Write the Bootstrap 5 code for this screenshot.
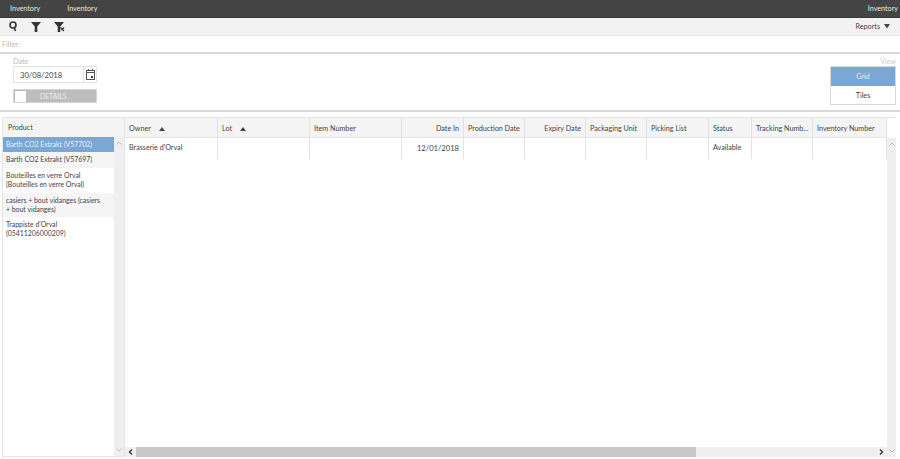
<!DOCTYPE html>
<html lang="en">
<head>
<meta charset="utf-8">
<title>Inventory</title>
<link href="https://cdn.jsdelivr.net/npm/bootstrap@5.3.0/dist/css/bootstrap.min.css" rel="stylesheet">
<style>
html,body{height:459px;overflow:hidden;margin:0;background:#fff}
body{font-family:Lato,"Open Sans",sans-serif;font-size:7.2px;line-height:10px;color:#444}
.topbar{height:18px;background:#444;color:#e8e8e8;padding:0 2px 0 10px;border-bottom:1px solid #3a3a3a}
.crumb-sep{width:27px}
.toolbar{height:18px;background:#f2f2f2;padding:0 10px 0 8px;border-bottom:1px solid #e6e6e6}
.tool-icons{gap:13px}
.report-label{padding-top:1px}
.filterbar{height:18px;padding:4px 2px 0;color:#bbb;border-bottom:2px solid #d8d8d8}
.params{height:58px;border-bottom:2px solid #d8d8d8;padding:3px 4px 0 13px}
.field-label{color:#bbb;height:9px}
.date-row{height:17px;width:84px}
.date-box{width:71px;border:1px solid #e2e2e2;padding:3px 6px;color:#444;font-size:7.6px}
.cal-btn{width:13px;border:1px solid #e2e2e2;border-left:0}
.toggle-bar{width:84px;height:14px;margin-top:6px;background:#bdbdbd;color:#eee;border:1px solid #d4d4d4;padding-left:1px}
.toggle-knob{width:11px;height:11px;background:#fff}
.toggle-text{padding-left:14px;font-size:6.8px}
.view-col{width:66px}
.view-label{color:#ccc;text-align:right;height:9px}
.view-box{border:1px solid #d8d8d8;width:66px}
.view-opt{height:18px;line-height:19px;text-align:center}
.view-active{background:#7aa7d4;color:#e6eef7;height:19px;line-height:20px}
.grid-area{height:340px;margin:5px 4px 0 2px}
.prod-panel{width:123px;border:1px solid #e4e4e4}
.prod-head{height:19px;background:#f4f4f4;padding:5px 5px}
.prod-body{height:319px}
.prod-list{width:112px}
.prod-row{padding:2px 3px;color:#444;background:#fff;height:16px;font-size:6.9px}
.prod-row.sel{background:#7aa7d4;color:#e9f0f8;height:15px}
.prod-row.two{height:24.5px;padding:3px 8px 0 3px;line-height:9.2px}
.prod-row.alt{background:#f5f5f5}
.v-scroll{width:10px;background:#efefef}
.main-panel{flex:1;min-width:0;border-top:1px solid #e4e4e4}
.head-row{height:20px;background:#f4f4f4;width:762px;border-bottom:1px solid #e6e6e6}
.data-row{height:21px;width:762px}
.cell{padding:6px 4px 0;border-right:1px solid #e2e2e2;white-space:nowrap;overflow:hidden;flex:none}
.data-row .cell{padding-top:5px}
.w-owner{width:93px}
.w-lot,.w-item{width:92px}
.w-date,.w-pick{width:62px}
.w-prod,.w-exp,.w-pack,.w-track{width:61px}
.w-stat{width:43px}
.w-inv{width:74px}
.data-row .w-date{font-size:7.6px}
.tri{display:inline-block;margin-left:8px;width:0;height:0;border-left:3px solid transparent;border-right:3px solid transparent;border-bottom:4px solid #444}
.main-body{height:319px}
.data-wrap{width:762px}
.h-scroll{height:10px;background:#efefef;width:762px}
.h-thumb{width:560px;background:#c8c8c8}
.h-arrow{width:11px}
</style>
</head>
<body>
<div class="topbar d-flex align-items-center">
  <span>Inventory</span><span class="crumb-sep"></span><span>Inventory</span><span class="ms-auto">Inventory</span>
</div>
<div class="toolbar d-flex align-items-center">
  <div class="d-flex tool-icons align-items-center">
    <svg width="10" height="11" viewBox="0 0 10 11"><circle cx="5" cy="4" r="3" fill="none" stroke="#333" stroke-width="1.6"/><path d="M6.3 7l1.2 3" stroke="#333" stroke-width="1.6"/></svg>
    <svg width="10" height="11" viewBox="0 0 10 11"><path d="M0 1h10L6.3 5.5V11H3.7V5.5z" fill="#333"/></svg>
    <svg width="11" height="11" viewBox="0 0 11 11"><path d="M0 1h10L6.3 5.5V11H3.7V5.5z" fill="#333"/><path d="M6.5 6.5l3.5 3.5M10 6.5l-2.5 2.5" stroke="#333" stroke-width="1.2"/></svg>
  </div>
  <span class="ms-auto report-label">Reports</span>
  <svg width="6" height="5" viewBox="0 0 6 5" class="d-block ms-1"><path d="M0 0h6L3 4.5z" fill="#444"/></svg>
</div>
<div class="filterbar">Filter:</div>
<div class="params d-flex justify-content-between">
  <div>
    <div class="field-label">Date</div>
    <div class="date-row d-flex">
      <div class="date-box">30/08/2018</div>
      <div class="cal-btn d-flex align-items-center justify-content-center">
        <svg width="9" height="11" viewBox="0 0 9 11"><rect x=".5" y="1.5" width="8" height="9" fill="none" stroke="#555"/><path d="M.5 3.5h8M2.5 0v2M6.5 0v2" stroke="#555"/><rect x="5" y="7" width="2" height="2" fill="#333"/></svg>
      </div>
    </div>
    <div class="toggle-bar d-flex align-items-center">
      <div class="toggle-knob"></div><div class="toggle-text">DETAILS</div>
    </div>
  </div>
  <div class="view-col">
    <div class="view-label">View</div>
    <div class="view-box">
      <div class="view-opt view-active">Grid</div>
      <div class="view-opt">Tiles</div>
    </div>
  </div>
</div>
<div class="grid-area d-flex">
  <div class="prod-panel">
    <div class="prod-head">Product</div>
    <div class="prod-body d-flex">
      <div class="prod-list flex-grow-1">
        <div class="prod-row sel">Barth CO2 Extrakt (V57702)</div>
        <div class="prod-row alt">Barth CO2 Extrakt (V57697)</div>
        <div class="prod-row two">Bouteilles en verre Orval (Bouteilles en verre Orval)</div>
        <div class="prod-row two alt">casiers + bout vidanges (casiers<br>+ bout vidanges)</div>
        <div class="prod-row two">Trappiste d'Orval (05411206000209)</div>
      </div>
      <div class="v-scroll d-flex flex-column justify-content-between align-items-center py-1">
        <svg width="6" height="4" viewBox="0 0 6 4"><path d="M.5 3.5L3 1l2.5 2.5" fill="none" stroke="#bbb"/></svg>
        <svg width="6" height="4" viewBox="0 0 6 4"><path d="M.5.5L3 3 5.5.5" fill="none" stroke="#bbb"/></svg>
      </div>
    </div>
  </div>
  <div class="main-panel">
    <div class="head-row d-flex">
      <div class="cell w-owner">Owner<i class="tri"></i></div>
      <div class="cell w-lot">Lot<i class="tri"></i></div>
      <div class="cell w-item">Item Number</div>
      <div class="cell w-date text-end">Date In</div>
      <div class="cell w-prod">Production Date</div>
      <div class="cell w-exp text-end">Expiry Date</div>
      <div class="cell w-pack">Packaging Unit</div>
      <div class="cell w-pick">Picking List</div>
      <div class="cell w-stat">Status</div>
      <div class="cell w-track">Tracking Numb...</div>
      <div class="cell w-inv">Inventory Number</div>
    </div>
    <div class="main-body d-flex">
      <div class="data-wrap d-flex flex-column justify-content-between">
        <div class="data-row d-flex">
          <div class="cell w-owner">Brasserie d'Orval</div>
          <div class="cell w-lot"></div>
          <div class="cell w-item"></div>
          <div class="cell w-date text-end">12/01/2018</div>
          <div class="cell w-prod"></div>
          <div class="cell w-exp"></div>
          <div class="cell w-pack"></div>
          <div class="cell w-pick"></div>
          <div class="cell w-stat">Available</div>
          <div class="cell w-track"></div>
          <div class="cell w-inv"></div>
        </div>
        <div class="h-scroll d-flex">
          <div class="h-arrow d-flex align-items-center justify-content-center"><svg width="5" height="6" viewBox="0 0 5 6"><path d="M4 .5L1.5 3 4 5.5" fill="none" stroke="#333" stroke-width="1.3"/></svg></div>
          <div class="h-thumb"></div>
          <div class="h-arrow ms-auto d-flex align-items-center justify-content-center"><svg width="5" height="6" viewBox="0 0 5 6"><path d="M1 .5L3.5 3 1 5.5" fill="none" stroke="#333" stroke-width="1.3"/></svg></div>
        </div>
      </div>
      <div class="v-scroll flex-grow-1 d-flex flex-column justify-content-between align-items-center py-1">
        <svg width="6" height="4" viewBox="0 0 6 4"><path d="M.5 3.5L3 1l2.5 2.5" fill="none" stroke="#bbb"/></svg>
        <svg width="6" height="4" viewBox="0 0 6 4"><path d="M.5.5L3 3 5.5.5" fill="none" stroke="#bbb"/></svg>
      </div>
    </div>
  </div>
</div>
</body>
</html>
